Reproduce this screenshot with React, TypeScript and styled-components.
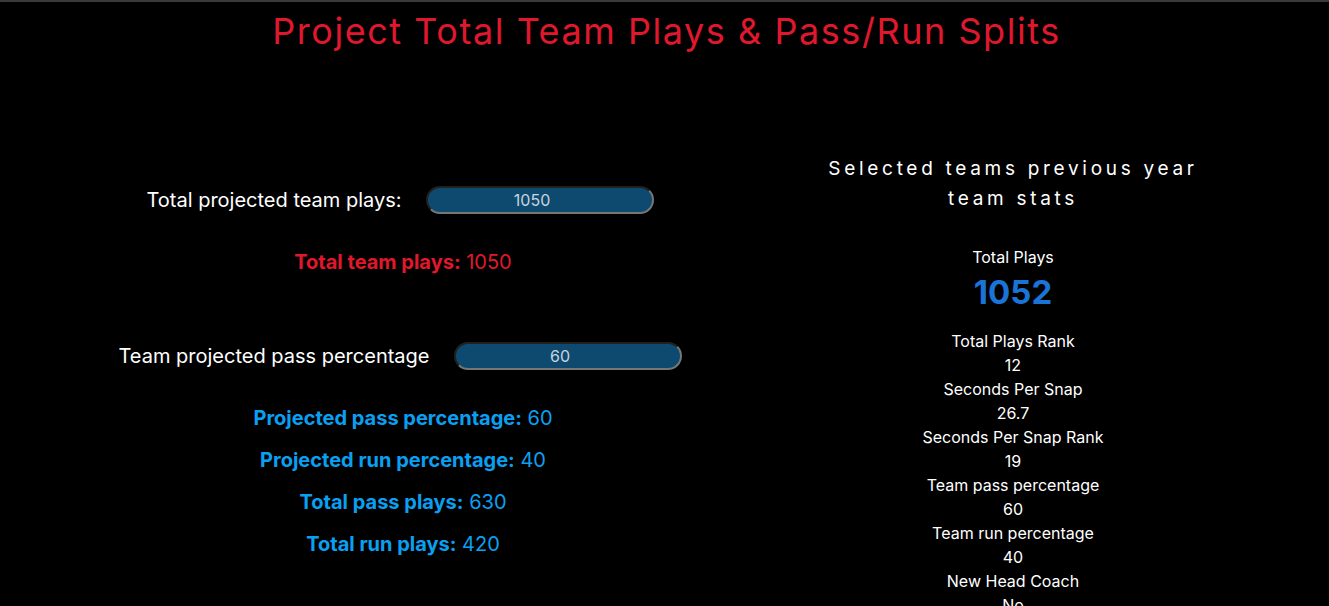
import React from "react";
import styled, { createGlobalStyle } from "styled-components";

const GlobalStyle = createGlobalStyle`
  html, body {
    margin: 0;
    padding: 0;
    background: #000;
  }
  body {
    font-family: Inter, "Noto Sans", sans-serif;
    color: #fff;
  }
`;

const Page = styled.div`
  min-height: 606px;
  background: #000;
  border-top: 2px solid #3a3a3a;
  box-sizing: border-box;
`;

const Title = styled.h1`
  margin: 7px 0 0;
  padding-left: 4px;
  text-align: center;
  font-size: 36px;
  line-height: 44px;
  font-weight: 400;
  letter-spacing: 1.55px;
  color: #e0182d;
`;

const Main = styled.div`
  display: grid;
  grid-template-columns: 800px 426px;
  margin-top: 101px;
`;

const LeftColumn = styled.section`
  display: flex;
  flex-direction: column;
  align-items: center;
  padding-top: 32px;
`;

const InputRow = styled.div<{ $mt?: number }>`
  display: flex;
  align-items: center;
  gap: 24px;
  margin-top: ${(p) => p.$mt ?? 0}px;
`;

const Label = styled.label`
  font-size: 20px;
  line-height: 24px;
  color: #fff;
`;

const Field = styled.input`
  width: 228px;
  height: 28px;
  box-sizing: border-box;
  border-radius: 14px;
  border: 2px inset #767676;
  background: #0e4a70;
  color: #c8d4de;
  text-align: center;
  font-family: Inter, sans-serif;
  font-size: 16px;
  padding: 0 15px 0 0;
  outline: none;
`;

const Result = styled.p<{ $color: string; $mt: number }>`
  margin: ${(p) => p.$mt}px 0 0;
  padding-left: 6px;
  font-size: 20px;
  line-height: 24px;
  color: ${(p) => p.$color};
  text-align: center;

  strong {
    font-weight: 700;
  }
`;

const RightColumn = styled.section`
  display: flex;
  flex-direction: column;
  align-items: center;
  text-align: center;
`;

const StatsHeader = styled.h2`
  margin: 0;
  max-width: 400px;
  font-size: 19px;
  line-height: 30px;
  font-weight: 400;
  letter-spacing: 3.7px;
  color: #fff;
`;

const StatLabel = styled.div<{ $mt?: number }>`
  margin-top: ${(p) => p.$mt ?? 0}px;
  font-size: 16px;
  line-height: 24px;
  color: #fff;
`;

const BigNumber = styled.div`
  margin-top: 4px;
  font-size: 33px;
  line-height: 38px;
  font-weight: 700;
  color: #1a74d8;
`;

const StatList = styled.div`
  margin-top: 18px;
  display: flex;
  flex-direction: column;
  align-items: center;
`;

const StatLine = styled.div`
  font-size: 16px;
  line-height: 24px;
  color: #fff;
`;

const RED = "#e0182d";
const BLUE = "#0aa0f2";

const stats: [string, string][] = [
  ["Total Plays Rank", "12"],
  ["Seconds Per Snap", "26.7"],
  ["Seconds Per Snap Rank", "19"],
  ["Team pass percentage", "60"],
  ["Team run percentage", "40"],
  ["New Head Coach", "No"],
];

export default function App() {
  return (
    <Page>
      <GlobalStyle />
      <Title>Project Total Team Plays &amp; Pass/Run Splits</Title>
      <Main>
        <LeftColumn>
          <InputRow>
            <Label>Total projected team plays:</Label>
            <Field type="text" defaultValue="1050" />
          </InputRow>
          <Result $color={RED} $mt={36}>
            <strong>Total team plays:</strong> 1050
          </Result>
          <InputRow $mt={68}>
            <Label>Team projected pass percentage</Label>
            <Field type="text" defaultValue="60" />
          </InputRow>
          <Result $color={BLUE} $mt={36}>
            <strong>Projected pass percentage:</strong> 60
          </Result>
          <Result $color={BLUE} $mt={18}>
            <strong>Projected run percentage:</strong> 40
          </Result>
          <Result $color={BLUE} $mt={18}>
            <strong>Total pass plays:</strong> 630
          </Result>
          <Result $color={BLUE} $mt={18}>
            <strong>Total run plays:</strong> 420
          </Result>
        </LeftColumn>
        <RightColumn>
          <StatsHeader>Selected teams previous year team stats</StatsHeader>
          <StatLabel $mt={31}>Total Plays</StatLabel>
          <BigNumber>1052</BigNumber>
          <StatList>
            {stats.map(([label, value]) => (
              <React.Fragment key={label}>
                <StatLine>{label}</StatLine>
                <StatLine>{value}</StatLine>
              </React.Fragment>
            ))}
          </StatList>
        </RightColumn>
      </Main>
    </Page>
  );
}
